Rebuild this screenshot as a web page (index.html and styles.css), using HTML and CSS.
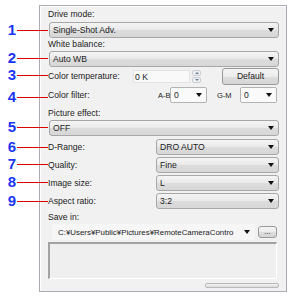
FILE: index.html
```html
<!DOCTYPE html>
<html lang="en">
  <head>
    <meta charset="UTF-8" />
    <title>Remote Camera Control | Settings</title>
    <link rel="stylesheet" href="styles.css">
  </head>

  <body>
    <main class="stage">
      <section class="panel">
        <div class="label first">Drive mode:</div>
        <div class="combo"><span>Single-Shot Adv.</span><i class="caret"></i></div>

        <div class="label">White balance:</div>
        <div class="combo wide-gap"><span>Auto WB</span><i class="caret"></i></div>

        <div class="row temp-row">
          <div class="row-label temp-label">Color temperature:</div>
          <div class="field">0 K</div>
          <div class="spinner">
            <div class="spin up"></div>
            <div class="spin down"></div>
          </div>
          <button class="btn">Default</button>
        </div>

        <div class="row filter-row">
          <div class="row-label filter-label">Color filter:</div>
          <span class="axis">A-B</span>
          <div class="combo small"><span>0</span><i class="caret"></i></div>
          <span class="axis gm">G-M</span>
          <div class="combo small"><span>0</span><i class="caret"></i></div>
        </div>

        <div class="label effect">Picture effect:</div>
        <div class="combo wide-gap"><span>OFF</span><i class="caret"></i></div>

        <div class="row pair first-pair">
          <div class="row-label">D-Range:</div>
          <div class="combo half"><span>DRO AUTO</span><i class="caret"></i></div>
        </div>
        <div class="row pair">
          <div class="row-label">Quality:</div>
          <div class="combo half"><span>Fine</span><i class="caret"></i></div>
        </div>
        <div class="row pair">
          <div class="row-label">Image size:</div>
          <div class="combo half"><span>L</span><i class="caret"></i></div>
        </div>
        <div class="row pair">
          <div class="row-label">Aspect ratio:</div>
          <div class="combo half"><span>3:2</span><i class="caret"></i></div>
        </div>

        <div class="label save">Save in:</div>
        <div class="row path-row">
          <div class="path"><span>C:¥Users¥Public¥Pictures¥RemoteCameraContro</span><i class="caret"></i></div>
          <button class="btn browse">...</button>
        </div>

        <div class="preview"></div>
        <div class="bar-row"><div class="hbar"></div></div>
      </section>

      <div class="callouts">
        <div class="callout c1"><span class="num">1</span><span class="lead"></span></div>
        <div class="callout c2"><span class="num">2</span><span class="lead"></span></div>
        <div class="callout c3"><span class="num">3</span><span class="lead"></span></div>
        <div class="callout c4"><span class="num">4</span><span class="lead"></span></div>
        <div class="callout c5"><span class="num">5</span><span class="lead"></span></div>
        <div class="callout c6"><span class="num">6</span><span class="lead"></span></div>
        <div class="callout c7"><span class="num">7</span><span class="lead"></span></div>
        <div class="callout c8"><span class="num">8</span><span class="lead"></span></div>
        <div class="callout c9"><span class="num">9</span><span class="lead"></span></div>
      </div>
    </main>
  </body>
</html>
```

FILE: styles.css
```css
* {
  padding: 0;
  margin: 0;
  box-sizing: border-box;
}

body {
  background-color: #ffffff;
  font-family: "Liberation Sans", Arial, sans-serif;
  font-size: 8.6px;
  color: #1b1b1b;
}

.stage {
  position: relative;
  padding: 5px 0 0 39px;
  width: 293px;
  height: 299px;
}

.panel {
  width: 248px;
  height: 287px;
  border: 1px solid #a9adb3;
  background-color: #f1f1f1;
  box-shadow: inset 1px 1px 0 #ffffff;
  padding: 0 7px 0 8px;
  display: flex;
  flex-direction: column;
}

.label {
  height: 12px;
  line-height: 12px;
}

.label.first {
  margin-top: 2px;
}

.combo {
  height: 16px;
  margin-top: 2px;
  border: 1px solid #a7a7a7;
  border-radius: 3px;
  background: linear-gradient(#f4f4f4, #e9e9e9 50%, #dcdcdc 51%, #d7d7d7);
  display: flex;
  align-items: center;
  justify-content: space-between;
  padding: 0 4px 0 3px;
  line-height: 14px;
  margin-left: 1px;
}

.combo.wide-gap {
  margin-top: 1px;
}

.caret {
  flex-shrink: 0;
  width: 0;
  height: 0;
  border-left: 3px solid transparent;
  border-right: 3px solid transparent;
  border-top: 4px solid #111111;
}

.row {
  display: flex;
  align-items: center;
  white-space: nowrap;
}

.row-label {
  line-height: 12px;
}

.temp-row {
  height: 18px;
}

.temp-label {
  width: 85px;
}

.field {
  width: 57px;
  height: 13px;
  line-height: 13px;
  border: 1px solid #e2e3e6;
  background-color: #f9f9f9;
  padding-left: 1px;
}

.spinner {
  margin-left: 2px;
  width: 9px;
  height: 13px;
  display: flex;
  flex-direction: column;
  gap: 1px;
}

.spin {
  flex: 1;
  border: 1px solid #c9ccd2;
  border-radius: 2px;
  background-color: #eef0f3;
  display: flex;
  align-items: center;
  justify-content: center;
}

.spin.up::after,
.spin.down::after {
  content: "";
  border-left: 2px solid transparent;
  border-right: 2px solid transparent;
}

.spin.up::after {
  border-bottom: 2px solid #6b7f99;
}

.spin.down::after {
  border-top: 2px solid #6b7f99;
}

.btn {
  font-family: "Liberation Sans", Arial, sans-serif;
  font-size: 8.6px;
  color: #1b1b1b;
  margin-left: auto;
  width: 57px;
  height: 17px;
  border: 1px solid #9a9a9a;
  border-radius: 3px;
  background: linear-gradient(#f4f4f4, #ececec 50%, #dedede 51%, #d4d4d4);
}

.filter-row {
  height: 16px;
  margin-top: 2px;
}

.filter-label {
  width: 110px;
}

.axis {
  width: 12px;
  font-size: 7.5px;
}

.axis.gm {
  width: 23px;
  margin-left: 10px;
}

.combo.small {
  width: 37px;
  margin: 0;
  background: #fafafa;
  border-color: #b3b3b3;
  border-radius: 2px;
}

.label.effect {
  margin-top: 4px;
}

.pair {
  height: 16px;
  margin-top: 2px;
  justify-content: space-between;
}

.pair.first-pair {
  margin-top: 3px;
}

.combo.half {
  width: 123px;
  margin: 0;
}

.label.save {
  margin-top: 2px;
}

.path-row {
  height: 16px;
  margin-top: 1px;
  padding-left: 4px;
}

.path {
  width: 203px;
  height: 16px;
  padding: 0 5px 0 6px;
  background-color: #f6f6f6;
  display: flex;
  align-items: center;
  justify-content: space-between;
  font-size: 7.9px;
}

.btn.browse {
  width: 19px;
  height: 12px;
  line-height: 8px;
  margin-left: 3px;
  margin-right: 2px;
  font-size: 8px;
}

.preview {
  height: 37px;
  margin-top: 2px;
  margin-right: 2px;
  border-top: 2px solid #a2a2a2;
  border-left: 2px solid #a2a2a2;
  border-bottom: 1px solid #ffffff;
  border-right: 1px solid #ffffff;
  background-color: #efefef;
}

.bar-row {
  display: flex;
  justify-content: flex-end;
  margin-top: 4px;
}

.hbar {
  width: 74px;
  height: 5px;
  border: 1px solid #b9b9b9;
  border-radius: 2px;
  background: linear-gradient(#f3f3f3, #dadada);
}

.callouts {
  position: absolute;
  left: 0;
  top: 0;
}

.callout {
  position: absolute;
  left: 0;
  display: flex;
  align-items: center;
  height: 16px;
}

.num {
  width: 16px;
  text-align: right;
  font-size: 15px;
  line-height: 16px;
  font-weight: bold;
  color: #1a36f2;
}

.lead {
  width: 31px;
  height: 1px;
  margin-left: 1px;
  background-color: #e00000;
}

.c1 { top: 22px; }
.c2 { top: 50px; }
.c3 { top: 67px; }
.c4 { top: 89px; }
.c5 { top: 119px; }
.c6 { top: 139px; }
.c7 { top: 156px; }
.c8 { top: 174px; }
.c9 { top: 193px; }
```
